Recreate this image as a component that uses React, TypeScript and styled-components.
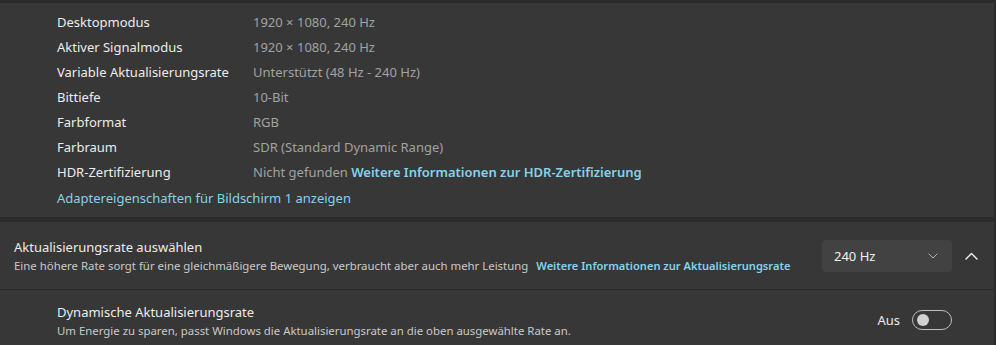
import React from "react";
import styled, { createGlobalStyle } from "styled-components";

const GlobalStyle = createGlobalStyle`
  html, body {
    margin: 0;
    padding: 0;
    background: #2b2b2b;
    font-family: "Noto Sans", "Open Sans", sans-serif;
    -webkit-font-smoothing: antialiased;
  }
`;

const Page = styled.div`
  padding: 3px 2px 0 0;
  display: flex;
  flex-direction: column;
  gap: 5px;
  width: 994px;
`;

const Card = styled.section`
  background: #373737;
  display: flex;
  flex-direction: column;
`;

const PropList = styled.div`
  display: grid;
  grid-template-columns: 196px auto;
  grid-auto-rows: 25px;
  align-items: center;
  padding: 6px 0 8px 57px;
  font-size: 13px;
`;

const PropLabel = styled.span`
  color: #ececec;
`;

const PropValue = styled.span`
  color: #a2a2a2;
`;

const Link = styled.a<{ $bold?: boolean; $small?: boolean }>`
  color: #85d3ea;
  text-decoration: none;
  font-weight: ${(p) => (p.$bold ? 600 : 400)};
  font-size: ${(p) => (p.$small ? "11.1px" : "13px")};
  cursor: pointer;
`;

const AdapterLink = styled(Link)`
  grid-column: 1 / span 2;
  padding-top: 2px;
`;

const SettingRow = styled.div<{ $indent?: boolean; $height: number }>`
  display: flex;
  align-items: center;
  min-height: ${(p) => p.$height}px;
  padding: 0 0 0 ${(p) => (p.$indent ? 57 : 14)}px;
  border-top: 1px solid #2b2b2b;
  &:first-child {
    border-top: none;
  }
`;

const TextBlock = styled.div`
  flex: 1;
  display: flex;
  flex-direction: column;
  white-space: nowrap;
  padding-top: 1px;
`;

const Title = styled.div`
  color: #ececec;
  font-size: 13px;
  line-height: 19px;
`;

const Subtitle = styled.div`
  color: #c9c9c9;
  font-size: 11.4px;
  line-height: 17px;
  display: flex;
  align-items: baseline;
  gap: 8px;
`;

const Dropdown = styled.button`
  width: 130px;
  height: 32px;
  border: none;
  border-radius: 4px;
  background: #424242;
  color: #f0f0f0;
  font-family: inherit;
  font-size: 13px;
  display: flex;
  align-items: center;
  justify-content: space-between;
  padding: 0 14px 0 12px;
`;

const ExpandButton = styled.button`
  width: 32px;
  height: 32px;
  margin: 0 7px 0 3px;
  border: none;
  background: transparent;
  display: flex;
  align-items: center;
  justify-content: center;
  padding: 0;
`;

const ToggleWrap = styled.label`
  display: flex;
  align-items: center;
  gap: 12px;
  margin-right: 42px;
  color: #ececec;
  font-size: 13px;
`;

const Switch = styled.span<{ $on: boolean }>`
  box-sizing: border-box;
  width: 40px;
  height: 20px;
  border-radius: 10px;
  border: 1px solid #bdbdbd;
  display: flex;
  align-items: center;
  padding: 0 4px;
  justify-content: ${(p) => (p.$on ? "flex-end" : "flex-start")};
  &::after {
    content: "";
    width: 12px;
    height: 12px;
    border-radius: 50%;
    background: #d0d0d0;
  }
`;

const ChevronDown = () => (
  <svg width="10" height="6" viewBox="0 0 10 6" fill="none">
    <path d="M1 1l4 4 4-4" stroke="#b5b5b5" strokeWidth="1" strokeLinecap="round" strokeLinejoin="round" />
  </svg>
);

const ChevronUp = () => (
  <svg width="13" height="8" viewBox="0 0 13 8" fill="none">
    <path d="M1 7l5.5-5.5L12 7" stroke="#f2f2f2" strokeWidth="1.4" strokeLinecap="round" strokeLinejoin="round" />
  </svg>
);

const props: [string, React.ReactNode][] = [
  ["Desktopmodus", "1920 × 1080, 240 Hz"],
  ["Aktiver Signalmodus", "1920 × 1080, 240 Hz"],
  ["Variable Aktualisierungsrate", "Unterstützt (48 Hz - 240 Hz)"],
  ["Bittiefe", "10-Bit"],
  ["Farbformat", "RGB"],
  ["Farbraum", "SDR (Standard Dynamic Range)"],
  [
    "HDR-Zertifizierung",
    <>
      Nicht gefunden <Link $bold>Weitere Informationen zur HDR-Zertifizierung</Link>
    </>,
  ],
];

export default function App() {
  return (
    <>
      <GlobalStyle />
      <Page>
        <Card>
          <PropList>
            {props.map(([label, value]) => (
              <React.Fragment key={label}>
                <PropLabel>{label}</PropLabel>
                <PropValue>{value}</PropValue>
              </React.Fragment>
            ))}
            <AdapterLink>Adaptereigenschaften für Bildschirm 1 anzeigen</AdapterLink>
          </PropList>
        </Card>
        <Card>
          <SettingRow $height={67}>
            <TextBlock>
              <Title>Aktualisierungsrate auswählen</Title>
              <Subtitle>
                Eine höhere Rate sorgt für eine gleichmäßigere Bewegung, verbraucht aber auch mehr Leistung
                <Link $bold $small>Weitere Informationen zur Aktualisierungsrate</Link>
              </Subtitle>
            </TextBlock>
            <Dropdown>
              240 Hz
              <ChevronDown />
            </Dropdown>
            <ExpandButton aria-label="Zuklappen">
              <ChevronUp />
            </ExpandButton>
          </SettingRow>
          <SettingRow $indent $height={60}>
            <TextBlock>
              <Title>Dynamische Aktualisierungsrate</Title>
              <Subtitle>Um Energie zu sparen, passt Windows die Aktualisierungsrate an die oben ausgewählte Rate an.</Subtitle>
            </TextBlock>
            <ToggleWrap>
              Aus
              <Switch $on={false} />
            </ToggleWrap>
          </SettingRow>
        </Card>
      </Page>
    </>
  );
}
